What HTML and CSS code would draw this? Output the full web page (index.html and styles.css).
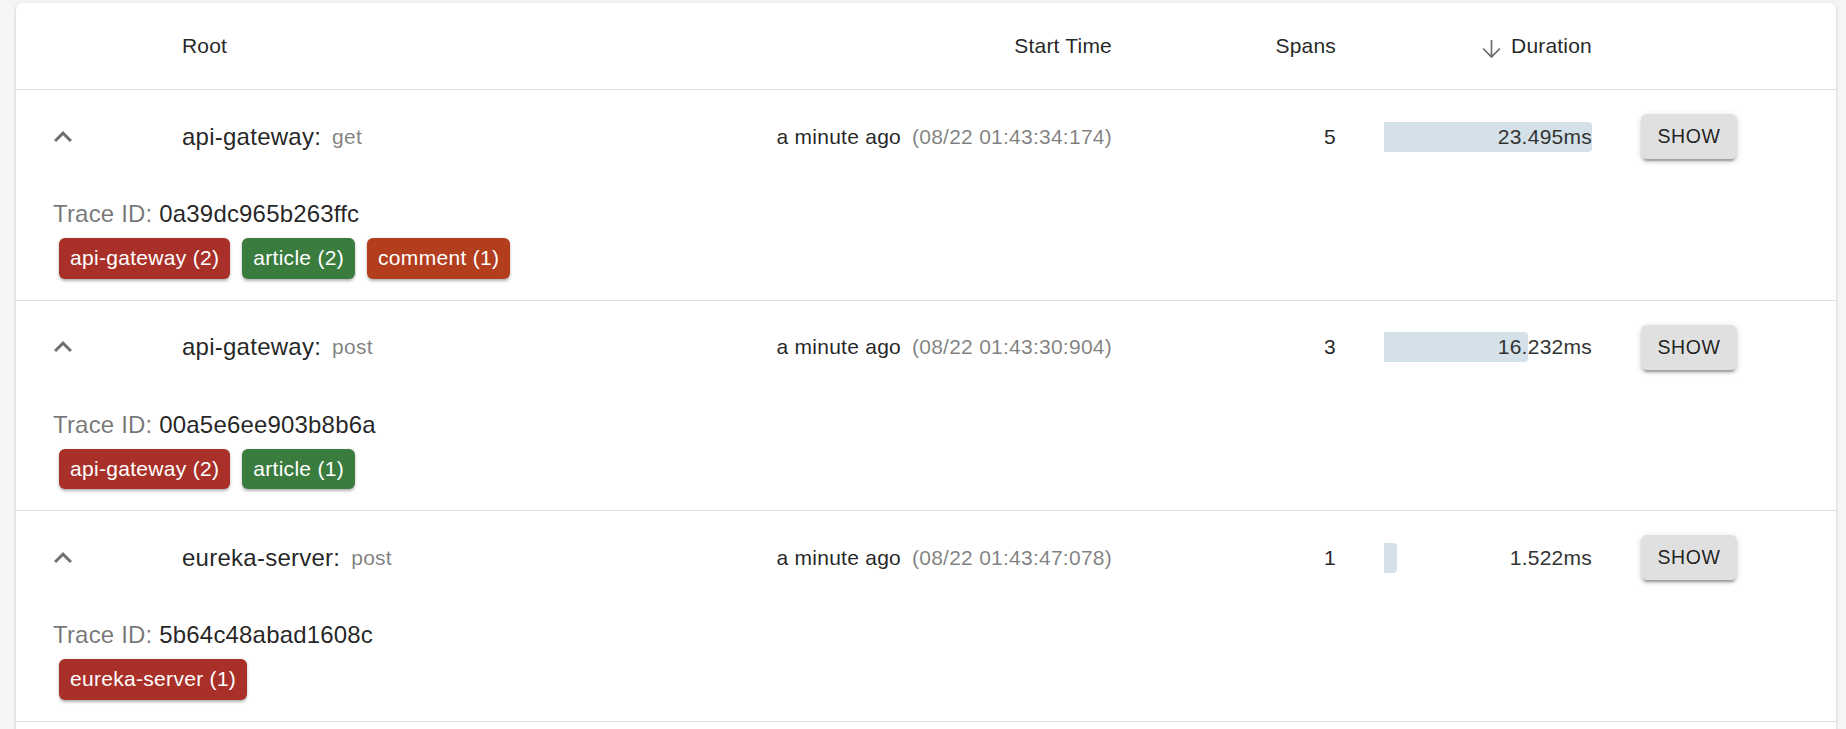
FILE: index.html
```html
<!DOCTYPE html>
<html lang="en">
<head>
<meta charset="utf-8">
<title>Traces</title>
<link rel="stylesheet" href="styles.css">
</head>
<body>
<div class="card">
  <div class="grid head">
    <div class="cell"></div>
    <div class="cell root">Root</div>
    <div class="cell num">Start Time</div>
    <div class="cell num">Spans</div>
    <div class="cell num sort">
      <svg class="sort-icon" viewBox="0 0 24 24"><path d="M12 4.5V19.5M4.5 12L12 19.5L19.5 12" fill="none" stroke="currentColor" stroke-width="1.5"/></svg>
      <span>Duration</span>
    </div>
    <div class="cell"></div>
  </div>

  <div class="trace">
    <div class="grid main">
      <div class="cell chev"><svg viewBox="0 0 24 24"><path d="M12 8l-6 6 1.41 1.41L12 10.83l4.59 4.58L18 14z"/></svg></div>
      <div class="cell root"><span class="svc">api-gateway:</span><span class="op">get</span></div>
      <div class="cell num"><span>a minute ago</span><span class="abs">(08/22 01:43:34:174)</span></div>
      <div class="cell num">5</div>
      <div class="cell dur"><div class="bar" style="width:100%"></div><span class="dur-text">23.495ms</span></div>
      <div class="cell act"><button class="btn">SHOW</button></div>
    </div>
    <div class="detail">
      <div class="trace-id"><span class="label">Trace ID:</span> 0a39dc965b263ffc</div>
      <div class="chips">
        <span class="chip red">api-gateway (2)</span>
        <span class="chip green">article (2)</span>
        <span class="chip orange">comment (1)</span>
      </div>
    </div>
  </div>

  <div class="trace">
    <div class="grid main">
      <div class="cell chev"><svg viewBox="0 0 24 24"><path d="M12 8l-6 6 1.41 1.41L12 10.83l4.59 4.58L18 14z"/></svg></div>
      <div class="cell root"><span class="svc">api-gateway:</span><span class="op">post</span></div>
      <div class="cell num"><span>a minute ago</span><span class="abs">(08/22 01:43:30:904)</span></div>
      <div class="cell num">3</div>
      <div class="cell dur"><div class="bar" style="width:69.09%"></div><span class="dur-text">16.232ms</span></div>
      <div class="cell act"><button class="btn">SHOW</button></div>
    </div>
    <div class="detail">
      <div class="trace-id"><span class="label">Trace ID:</span> 00a5e6ee903b8b6a</div>
      <div class="chips">
        <span class="chip red">api-gateway (2)</span>
        <span class="chip green">article (1)</span>
      </div>
    </div>
  </div>

  <div class="trace">
    <div class="grid main">
      <div class="cell chev"><svg viewBox="0 0 24 24"><path d="M12 8l-6 6 1.41 1.41L12 10.83l4.59 4.58L18 14z"/></svg></div>
      <div class="cell root"><span class="svc">eureka-server:</span><span class="op">post</span></div>
      <div class="cell num"><span>a minute ago</span><span class="abs">(08/22 01:43:47:078)</span></div>
      <div class="cell num">1</div>
      <div class="cell dur"><div class="bar" style="width:6.48%"></div><span class="dur-text">1.522ms</span></div>
      <div class="cell act"><button class="btn">SHOW</button></div>
    </div>
    <div class="detail">
      <div class="trace-id"><span class="label">Trace ID:</span> 5b64c48abad1608c</div>
      <div class="chips">
        <span class="chip red">eureka-server (1)</span>
      </div>
    </div>
  </div>
</div>
</body>
</html>
```

FILE: styles.css
```css
html, body {
  margin: 0;
  padding: 0;
}

body {
  background: #f5f5f5;
  padding: 3px 10px 0 16px;
  font-family: "Liberation Sans", Arial, Helvetica, sans-serif;
  color: rgba(0, 0, 0, 0.87);
  overflow: hidden;
}

.card {
  background: #fff;
  border-radius: 6px;
  box-shadow: 0 3px 1.5px -1.5px rgba(0, 0, 0, 0.2), 0 1.5px 1.5px 0 rgba(0, 0, 0, 0.14), 0 1.5px 4.5px 0 rgba(0, 0, 0, 0.12);
  padding-bottom: 40px;
}

.grid {
  display: grid;
  grid-template-columns: 142px 542px 436px 224px 256px 1fr;
}

.cell {
  display: flex;
  align-items: center;
  min-width: 0;
  white-space: nowrap;
}

.head {
  height: 86px;
  border-bottom: 1px solid #e0e0e0;
  font-size: 21px;
  letter-spacing: 0.2px;
}

.root {
  padding-left: 24px;
}

.num {
  justify-content: flex-end;
  padding-right: 24px;
}

.sort-icon {
  width: 27px;
  height: 27px;
  margin-right: 6px;
  color: #6f6f6f;
  flex: none;
  position: relative;
  top: 2px;
}

.trace {
  border-bottom: 1px solid #e0e0e0;
}

.main {
  height: 93px;
  font-size: 21px;
  letter-spacing: 0.25px;
}

.chev svg {
  width: 36px;
  height: 36px;
  margin-left: 29px;
  fill: #707070;
}

.svc {
  font-size: 24px;
  letter-spacing: 0.25px;
}

.op {
  margin-left: 11px;
  color: rgba(0, 0, 0, 0.5);
}

.abs {
  margin-left: 11px;
  color: rgba(0, 0, 0, 0.5);
}

.dur {
  display: grid;
  align-items: center;
  padding: 0 24px;
}

.bar {
  grid-area: 1 / 1;
  justify-self: start;
  height: 30px;
  background: #d4e1e8;
  border-radius: 0 4px 4px 0;
}

.dur-text {
  grid-area: 1 / 1;
  justify-self: end;
  color: #333;
}

.act {
  padding-left: 25px;
}

.btn {
  min-width: 96px;
  height: 45px;
  margin: 0;
  padding: 0 15px;
  border: 0;
  border-radius: 6px;
  background: #e0e0e0;
  color: rgba(0, 0, 0, 0.87);
  font-family: "Liberation Sans", Arial, Helvetica, sans-serif;
  font-size: 19.5px;
  letter-spacing: 0.56px;
  box-shadow: 0 4.5px 1.5px -3px rgba(0, 0, 0, 0.2), 0 3px 3px 0 rgba(0, 0, 0, 0.14), 0 1.5px 7.5px 0 rgba(0, 0, 0, 0.12);
  cursor: pointer;
}

.detail {
  padding: 13px 0 15px 37px;
}

.trace-id {
  font-size: 24px;
  line-height: 36px;
  letter-spacing: 0.18px;
  color: rgba(0, 0, 0, 0.87);
}

.label {
  color: rgba(0, 0, 0, 0.54);
}

.chips {
  display: flex;
}

.chip {
  margin: 6px;
  height: 40.5px;
  line-height: 40.5px;
  padding: 0 11px;
  border-radius: 6px;
  font-size: 21px;
  letter-spacing: 0.3px;
  color: #fff;
  box-shadow: 0 1.5px 3px rgba(0, 0, 0, 0.3);
}

.red {
  background: #a93028;
}

.green {
  background: #3a7b3e;
}

.orange {
  background: #b23e1e;
}
```
